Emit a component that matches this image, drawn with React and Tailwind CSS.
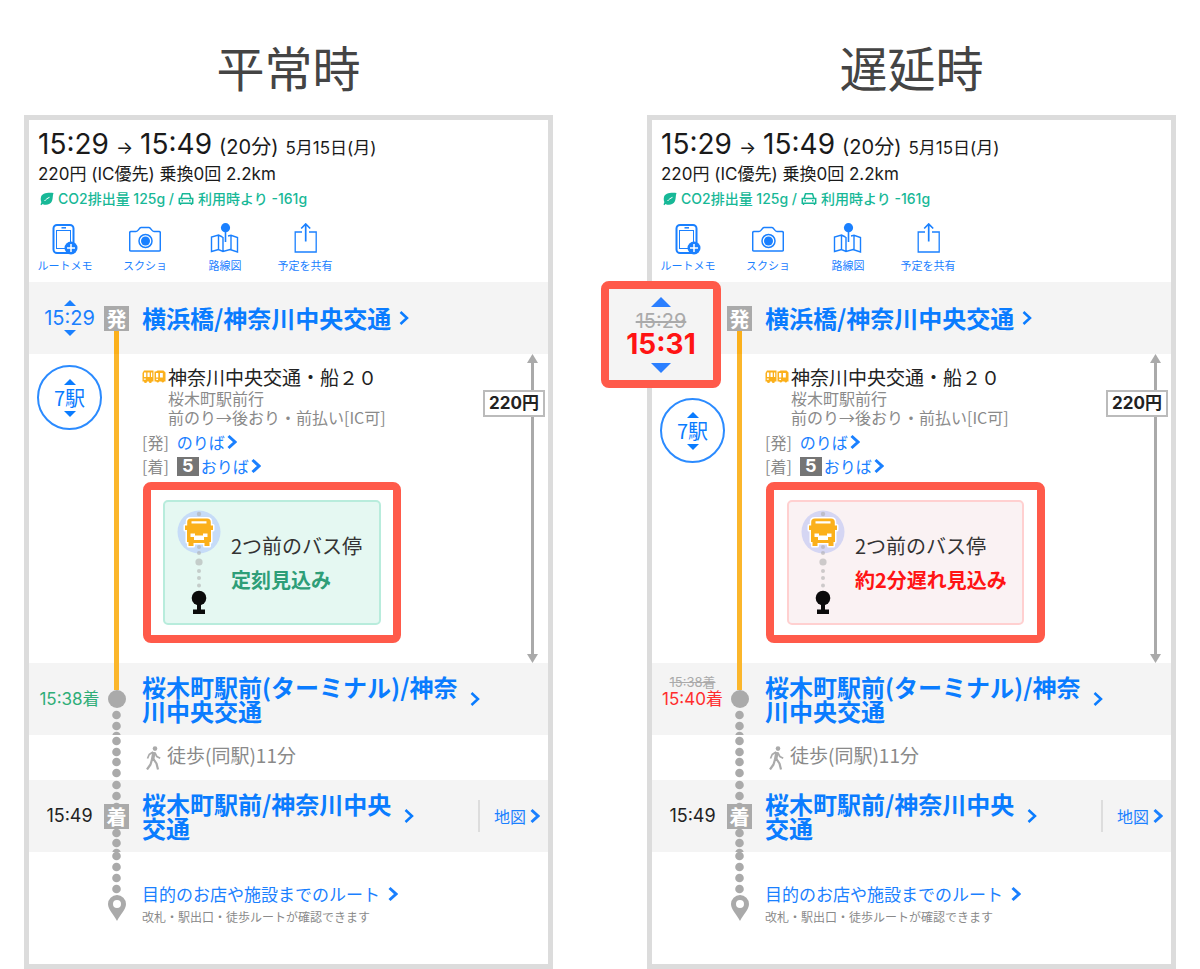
const FONT = 'font-[Inter,"Noto_Sans_CJK_JP",sans-serif]';
const FONT_JP = 'font-["Noto_Sans_CJK_JP",sans-serif]';

function Triangle({ up, className }) {
  return (
    <svg viewBox="0 0 14 7" preserveAspectRatio="none" className={`fill-current ${className}`} aria-hidden="true">
      <path d={up ? "M0 7 7 0l7 7z" : "M0 0h14L7 7z"} />
    </svg>
  );
}

function Chevron({ className }) {
  return (
    <svg viewBox="0 0 10 16" fill="none" stroke="currentColor" className={`shrink-0 ${className}`} aria-hidden="true">
      <path d="M1.5 2 8 8l-6.5 6" />
    </svg>
  );
}

function LeafIcon() {
  return (
    <svg viewBox="0 0 14 14" className="size-[14px] shrink-0" aria-hidden="true">
      <path fill="currentColor" d="M13.500 1C8 .5 1.500.8.800 6c-.2 1.700.1 2.900.6 4L.5 12.400l.9.8 1.100-1.300C5.500 13.500 10.500 13 12 9c1-2.500.5-5.500 1.500-8z" />
      <path fill="none" stroke="#fff" strokeWidth="1" d="M4.500 9C6 7.300 7.300 6.300 9.500 5.300" />
    </svg>
  );
}

function CarIcon() {
  return (
    <svg viewBox="0 0 16 14" className="h-[14px] w-4 shrink-0" fill="none" stroke="currentColor" strokeWidth="1.500" aria-hidden="true">
      <path d="M3 6.500 4.500 1.800h7L13 6.500M1.300 6.500h13.400v4.700H1.300zM2.500 11v2M13.500 11v2M3.500 8.800H5M11 8.800h1.500" />
    </svg>
  );
}

function PhoneIcon() {
  return (
    <svg viewBox="0 0 32 32" className="size-8" fill="none" stroke="currentColor" strokeWidth="1.500" aria-hidden="true">
      <rect x="4.500" y="2" width="20" height="28" rx="3.500" strokeWidth="2" />
      <rect x="7.500" y="7.500" width="14" height="18" strokeWidth="1" />
      <path d="M12.500 4.800h4.500" />
      <circle cx="22" cy="25" r="6.500" fill="currentColor" stroke="none" />
      <path d="M22 21v8M18 25h8" stroke="#fff" />
    </svg>
  );
}

function CameraIcon() {
  return (
    <svg viewBox="0 0 32 32" className="size-8" fill="none" stroke="currentColor" strokeWidth="1.500" aria-hidden="true">
      <path d="M2 8.500h5c2.500 0 3-4 5-4h8c2 0 2.500 4 5 4h5c.8 0 1.300.5 1.300 1.300v17c0 .8-.5 1.300-1.300 1.300H2c-.8 0-1.300-.5-1.300-1.300v-17c0-.8.5-1.300 1.300-1.300z" />
      <circle cx="16.500" cy="18" r="6.500" />
      <circle cx="16.500" cy="18" r="4.500" fill="currentColor" stroke="none" />
    </svg>
  );
}

function MapIcon() {
  return (
    <svg viewBox="0 0 32 32" className="size-8" fill="none" stroke="currentColor" strokeWidth="1.400" aria-hidden="true">
      <path d="M13.500 14 9.500 12 2.500 14v14.500l7-2 4.500 2 7-2 7.500 2.500V14.500L22 12.300 19 13M9.500 12v14.500M14 14v14.500M22 12.300v14" />
      <path d="M16.500 8v11" strokeWidth="1.600" />
      <circle cx="16.500" cy="4.700" r="4.600" fill="currentColor" stroke="none" />
    </svg>
  );
}

function ShareIcon() {
  return (
    <svg viewBox="0 0 32 32" className="size-8" fill="none" stroke="currentColor" strokeWidth="1.300" aria-hidden="true">
      <path d="M13 9H6.200v20h21V9H20" />
      <path d="M16.700 18.500V1.500M12.200 5.500l4.500-4.500 4.500 4.500" strokeWidth="1.700" />
    </svg>
  );
}

function BusPairIcon() {
  return (
    <svg viewBox="0 0 24 14" className="h-[14px] w-6 shrink-0" fill="#fbb01b" aria-hidden="true">
      <path fillRule="evenodd" d="M2 .5h9.500v11H9.800a1.500 1.500 0 0 1-3 0H5a1.500 1.500 0 0 1-3 0H.5V3zM2 2.500V7h2.200V2.500zm3.500 0V7h2.200V2.500zM9 2.500V7h1.200V2.500zM1.800 8.500v1.200h2V8.500z" />
      <path fillRule="evenodd" d="M12.500 1.500H14L15.500.5h6l2 2v9h-1.300a1.500 1.500 0 0 1-2.800 0h-2.200a1.500 1.500 0 0 1-2.900 0h-1.800zM14 3v4.500h2.300V3zm4 0v4.500h2.800V3zm-3.800 5.800V10H16V8.800z" />
    </svg>
  );
}

function WalkIcon() {
  return (
    <svg viewBox="0 0 16 24" className="mt-1 h-6 w-4 shrink-0" fill="none" stroke="#aaa" strokeLinejoin="round" aria-hidden="true">
      <circle cx="10" cy="2.600" r="2.300" fill="#aaa" stroke="none" />
      <path d="M9 6 7.500 14" strokeWidth="3.500" />
      <path d="M8 6 4.200 8.500 2.500 12.500M10 7l1.800 3.500 3.400 1.700" strokeWidth="1.700" />
      <path d="M7 13.500 5.500 18.500 2 23.500M8.500 13l3 4.500 1.500 6" strokeWidth="2.200" />
    </svg>
  );
}

function PinIcon() {
  return (
    <svg viewBox="0 0 18 26" className="h-[26px] w-[18px] shrink-0" aria-hidden="true">
      <path fill="#aaa" fillRule="evenodd" d="M9 0a9 9 0 0 1 9 9c0 5.500-5.500 10-9 17C5.500 19 0 14.500 0 9a9 9 0 0 1 9-9zm0 5a4 4 0 1 0 0 8 4 4 0 0 0 0-8z" />
    </svg>
  );
}

function Dots({ ys, height, className = "" }) {
  return (
    <svg viewBox={`0 0 9 ${height}`} width="9" height={height} fill="#aaa" className={`shrink-0 ${className}`} aria-hidden="true">
      {ys.map((y) => (
        <circle key={y} cx="4.500" cy={y} r="4.300" />
      ))}
    </svg>
  );
}

function BusProgress({ halo }) {
  return (
    <svg viewBox="0 0 44 106" className="h-[106px] w-11 shrink-0" aria-hidden="true">
      <circle cx="22" cy="22" r="21.500" fill={halo} />
      <g fill="#aaa" opacity="0.550">
        <circle cx="22" cy="4" r="2.200" />
        <circle cx="22" cy="37" r="2" />
        <circle cx="22" cy="43" r="2" />
        <circle cx="22" cy="52" r="3.600" />
        <circle cx="22" cy="61" r="2" />
        <circle cx="22" cy="68" r="2" />
        <circle cx="22" cy="75.500" r="2" />
      </g>
      <path
        fill="#fff"
        stroke="#fff"
        strokeWidth="3"
        strokeLinejoin="round"
        d="M14 8.500h16c2.500 0 3.800 1.500 3.800 3.500v3.500H36v4.500h-2v12h-1.500v4h-5v-3h-11v3h-5v-4H10V20H8v-4.500h2.200V12c0-2 1.300-3.500 3.800-3.500z"
      />
      <path
        fill="#fbb01b"
        fillRule="evenodd"
        d="M14 8.500h16c2.500 0 3.800 1.500 3.800 3.500v3.500H36v4.500h-2v12h-1.500v4h-5v-3h-11v3h-5v-4H10V20H8v-4.500h2.200V12c0-2 1.300-3.500 3.800-3.500zM14.500 11.300v2.200h15v-2.200zM13.500 23.500v3.500h3.500v3h10v-3h3.500v-3.500h-4.500v2h-8v-2z"
      />
      <circle cx="22" cy="88" r="7.300" fill="#0b0b0b" />
      <path fill="#0b0b0b" d="M20 94h4v5.500h4v4.500H16v-4.500h4z" />
    </svg>
  );
}

function StopBadge({ children }) {
  return (
    <span className={`flex size-[25px] shrink-0 items-center justify-center bg-[#aaa] text-xl leading-none font-bold text-white ${FONT_JP}`}>
      {children}
    </span>
  );
}

const ROW = "grid grid-cols-[75px_25px_minmax(0,1fr)]";
const TOOLS = [
  ["ルートメモ", PhoneIcon],
  ["スクショ", CameraIcon],
  ["路線図", MapIcon],
  ["予定を共有", ShareIcon],
];

function Summary() {
  return (
    <header className="px-[9px] pt-2 pb-[7px] text-[#1a1a1a]">
      <h2 className="flex h-8 items-baseline gap-[7px] leading-8 whitespace-nowrap">
        <span className="text-[28px]">15:29</span>
        <span className="text-lg">→</span>
        <span className="text-[28px]">15:49</span>
        <span className="text-xl leading-8">(20分)</span>
        <span className="text-[17px]">5月15日(月)</span>
      </h2>
      <p className="mt-0.5 h-6 text-[17px] leading-6 whitespace-nowrap">220円 (IC優先) 乗換0回 2.2km</p>
      <p className="mt-[3px] flex items-center gap-1 pl-0.5 text-sm leading-5 font-medium whitespace-nowrap text-[#17b897]">
        <LeafIcon />
        <span>CO2排出量 125g /</span>
        <CarIcon />
        <span>利用時より -161g</span>
      </p>
      <nav className="mt-3.5 flex gap-[26px]">
        {TOOLS.map(([label, Icon]) => (
          <button key={label} type="button" className="flex w-[54px] flex-col items-center text-[#1a80ff]">
            <Icon />
            <span className={`text-[11px] leading-5 whitespace-nowrap ${FONT_JP}`}>{label}</span>
          </button>
        ))}
      </nav>
    </header>
  );
}

function DepartureTime({ delayed }) {
  if (delayed) {
    return (
      <div className="absolute top-[-1px] left-[-51px] flex h-[107px] w-[120px] flex-col items-center justify-center rounded-lg border-8 border-[#ff5a4a] bg-[#f4f4f4]">
        <button type="button" aria-label="前の便" className="text-[#2b7fff]">
          <Triangle up className="h-2.5 w-5" />
        </button>
        <s className="mt-1 text-xl leading-5 text-[#aaa]">15:29</s>
        <span className="text-[28px] leading-[26px] font-bold text-[#ff1414]">15:31</span>
        <button type="button" aria-label="次の便" className="mt-1.5 text-[#2b7fff]">
          <Triangle className="h-2.5 w-5" />
        </button>
      </div>
    );
  }
  return (
    <div className="flex flex-col items-center pl-1.5 text-[#1a80ff]">
      <button type="button" aria-label="前の便">
        <Triangle up className="h-1.5 w-3" />
      </button>
      <span className="text-xl leading-6">15:29</span>
      <button type="button" aria-label="次の便">
        <Triangle className="h-1.5 w-3" />
      </button>
    </div>
  );
}

function StationLink({ children, className = "" }) {
  return (
    <a href="#station" className={`flex items-center gap-2 text-2xl leading-6 font-bold text-[#0a7cff] ${FONT_JP} ${className}`}>
      <span>{children}</span>
      <Chevron className="h-4 w-2.5 stroke-[2.5]" />
    </a>
  );
}

function BusStatus({ delayed }) {
  return (
    <div className={`ml-px flex h-[161px] w-fit items-center rounded-lg border-8 border-[#ff5a4a] ${delayed ? "px-[13px]" : "px-3"}`}>
      <div
        className={`flex h-[125px] items-center gap-2.5 rounded-[5px] border-2 pl-3 text-xl ${
          delayed ? "border-[#ffd0d0] bg-[#faf2f3] pr-[15px]" : "border-[#b8ecdc] bg-[#e5f8f2] pr-[17px]"
        }`}
      >
        <BusProgress halo={delayed ? "#d5d6f3" : "#c6dcf8"} />
        <div className="whitespace-nowrap">
          <p className="leading-[34px] text-[#333]">2つ前のバス停</p>
          <p className={`leading-[34px] font-bold ${delayed ? "text-[#ff1414]" : "text-[#2e9e78]"}`}>
            {delayed ? "約2分遅れ見込み" : "定刻見込み"}
          </p>
        </div>
      </div>
    </div>
  );
}

function FareScale() {
  return (
    <div className="absolute inset-y-0 right-[3px] flex w-[62px] flex-col items-end">
      <Triangle up className="mr-[7px] h-[9px] w-[11px] shrink-0 text-[#aaa]" />
      <span className="mr-[11px] h-[27px] w-[3px] shrink-0 bg-[#aaa]" />
      <span className="w-full border-2 border-[#bbb] bg-white text-center text-[17px] leading-[23px] font-bold text-[#222]">220円</span>
      <span className="mr-[11px] w-[3px] flex-1 bg-[#aaa]" />
      <Triangle className="mr-[7px] h-[9px] w-[11px] shrink-0 text-[#aaa]" />
    </div>
  );
}

function RideLeg({ delayed }) {
  return (
    <section className={`${ROW} relative`}>
      <div className={`flex justify-center pl-1.5 ${delayed ? "pt-11" : "pt-[11px]"}`}>
        <button
          type="button"
          className={`flex size-[65px] flex-col items-center justify-center rounded-full border-2 border-[#2b8bff] text-[#0a7cff] ${FONT_JP}`}
        >
          <Triangle up className="h-1.5 w-3" />
          <span className="text-xl leading-[26px]">7駅</span>
          <Triangle className="h-1.5 w-3" />
        </button>
      </div>
      <div className="flex justify-center">
        <span className="w-[5px] bg-[#fbb62b]" />
      </div>
      <div className={`pt-[11px] pb-5 pl-[13px] text-base text-[#8a8a8a] ${FONT_JP}`}>
        <h3 className="flex items-center gap-0.5 text-[19px] leading-6 text-[#222]">
          <BusPairIcon />
          神奈川中央交通・船２０
        </h3>
        <p className="pl-[26px] leading-[19px]">桜木町駅前行</p>
        <p className="pl-[26px] leading-[19px]">前のり→後おり・前払い[IC可]</p>
        <p className="mt-[3px] flex items-center leading-6">
          [発]
          <a href="#boarding" className="ml-2 flex items-center gap-0.5 text-[#1a80ff]">
            のりば
            <Chevron className="h-4 w-2.5 stroke-3" />
          </a>
        </p>
        <p className="mb-1 flex items-center leading-6">
          [着]
          <span className={`ml-2 flex h-[19px] w-[22px] items-center justify-center bg-[#757575] text-lg leading-none font-bold text-white ${FONT}`}>5</span>
          <a href="#alighting" className="ml-0.5 flex items-center gap-0.5 text-[#1a80ff]">
            おりば
            <Chevron className="h-4 w-2.5 stroke-3" />
          </a>
        </p>
        <BusStatus delayed={delayed} />
      </div>
      <FareScale />
    </section>
  );
}

function RoutePanel({ title, delayed }) {
  return (
    <section className="min-w-0 flex-1">
      <h1 className={`pt-7 text-center text-5xl leading-[76px] text-[#444] ${FONT_JP}`}>{title}</h1>
      <article className="mt-[11px] border-5 border-[#dcdcdc] bg-white">
        <Summary />

        <section className={`${ROW} relative h-[72px] items-center bg-[#f4f4f4]`}>
          <DepartureTime delayed={delayed} />
          <div className="col-start-2 flex flex-col items-center self-stretch">
            <span className="h-6 shrink-0" />
            <StopBadge>発</StopBadge>
            <span className="w-[5px] flex-1 bg-[#fbb01b]" />
          </div>
          <StationLink className="pl-[13px]">横浜橋/神奈川中央交通</StationLink>
        </section>

        <RideLeg delayed={delayed} />

        <section className={`${ROW} relative h-[72px] items-center bg-[#f4f4f4]`}>
          <div className={`text-center text-[17px] leading-[18px] whitespace-nowrap ${delayed ? "-mt-4" : ""} pl-1.5`}>
            {delayed && <s className="block text-[13px] leading-4 text-[#aaa]">15:38着</s>}
            <span className={delayed ? "text-[#ff2d2d]" : "text-[#2fae78]"}>{delayed ? "15:40着" : "15:38着"}</span>
          </div>
          <div className="flex flex-col items-center self-stretch">
            <span className="h-[27px] w-[5px] shrink-0 bg-[#fbb62b]" />
            <span className="size-[18px] shrink-0 rounded-full bg-[#aaa]" />
            <Dots ys={[7, 18, 28]} height={27} />
          </div>
          <StationLink className="pr-[68px] pl-[13px]">桜木町駅前(ターミナル)/神奈川中央交通</StationLink>
        </section>

        <section className={`${ROW} h-[45px] items-center`}>
          <div className="col-start-2 flex justify-center self-stretch">
            <Dots ys={[6, 17, 27, 38]} height={45} />
          </div>
          <p className={`flex items-center gap-1.5 pb-1 pl-4 text-[19px] text-[#8a8a8a] ${FONT_JP}`}>
            <WalkIcon />
            徒歩(同駅)11分
          </p>
        </section>

        <section className={`${ROW} h-[72px] items-center bg-[#f4f4f4]`}>
          <span className="pl-1.5 text-center text-lg text-[#222]">15:49</span>
          <div className="flex flex-col items-center self-stretch">
            <Dots ys={[5, 16, 27]} height={24} />
            <StopBadge>着</StopBadge>
            <Dots ys={[4, 14, 24]} height={23} />
          </div>
          <div className="flex items-center justify-between pl-[13px]">
            <StationLink className="w-[272px]">桜木町駅前/神奈川中央交通</StationLink>
            <a
              href="#map"
              className={`flex h-8 items-center gap-1 border-l-2 border-[#ddd] pr-2 pl-3.5 text-base whitespace-nowrap text-[#1a80ff] ${FONT_JP}`}
            >
              地図
              <Chevron className="h-4 w-2.5 stroke-3" />
            </a>
          </div>
        </section>

        <section className={`${ROW} h-[112px]`}>
          <div className="col-start-2 flex flex-col items-center">
            <Dots ys={[4, 15, 26, 37]} height={43} />
            <PinIcon />
          </div>
          <div className={`pt-7 pl-[13px] whitespace-nowrap ${FONT_JP}`}>
            <a href="#destination" className="flex items-center gap-2 text-[17px] leading-7 text-[#1a80ff]">
              目的のお店や施設までのルート
              <Chevron className="h-4 w-2.5 stroke-3" />
            </a>
            <p className="text-xs leading-[18px] text-[#8a8a8a]">改札・駅出口・徒歩ルートが確認できます</p>
          </div>
        </section>
      </article>
    </section>
  );
}

export default function App() {
  return (
    <main className={`flex min-h-screen gap-[94px] bg-white px-6 ${FONT}`}>
      <RoutePanel title="平常時" delayed={false} />
      <RoutePanel title="遅延時" delayed />
    </main>
  );
}
